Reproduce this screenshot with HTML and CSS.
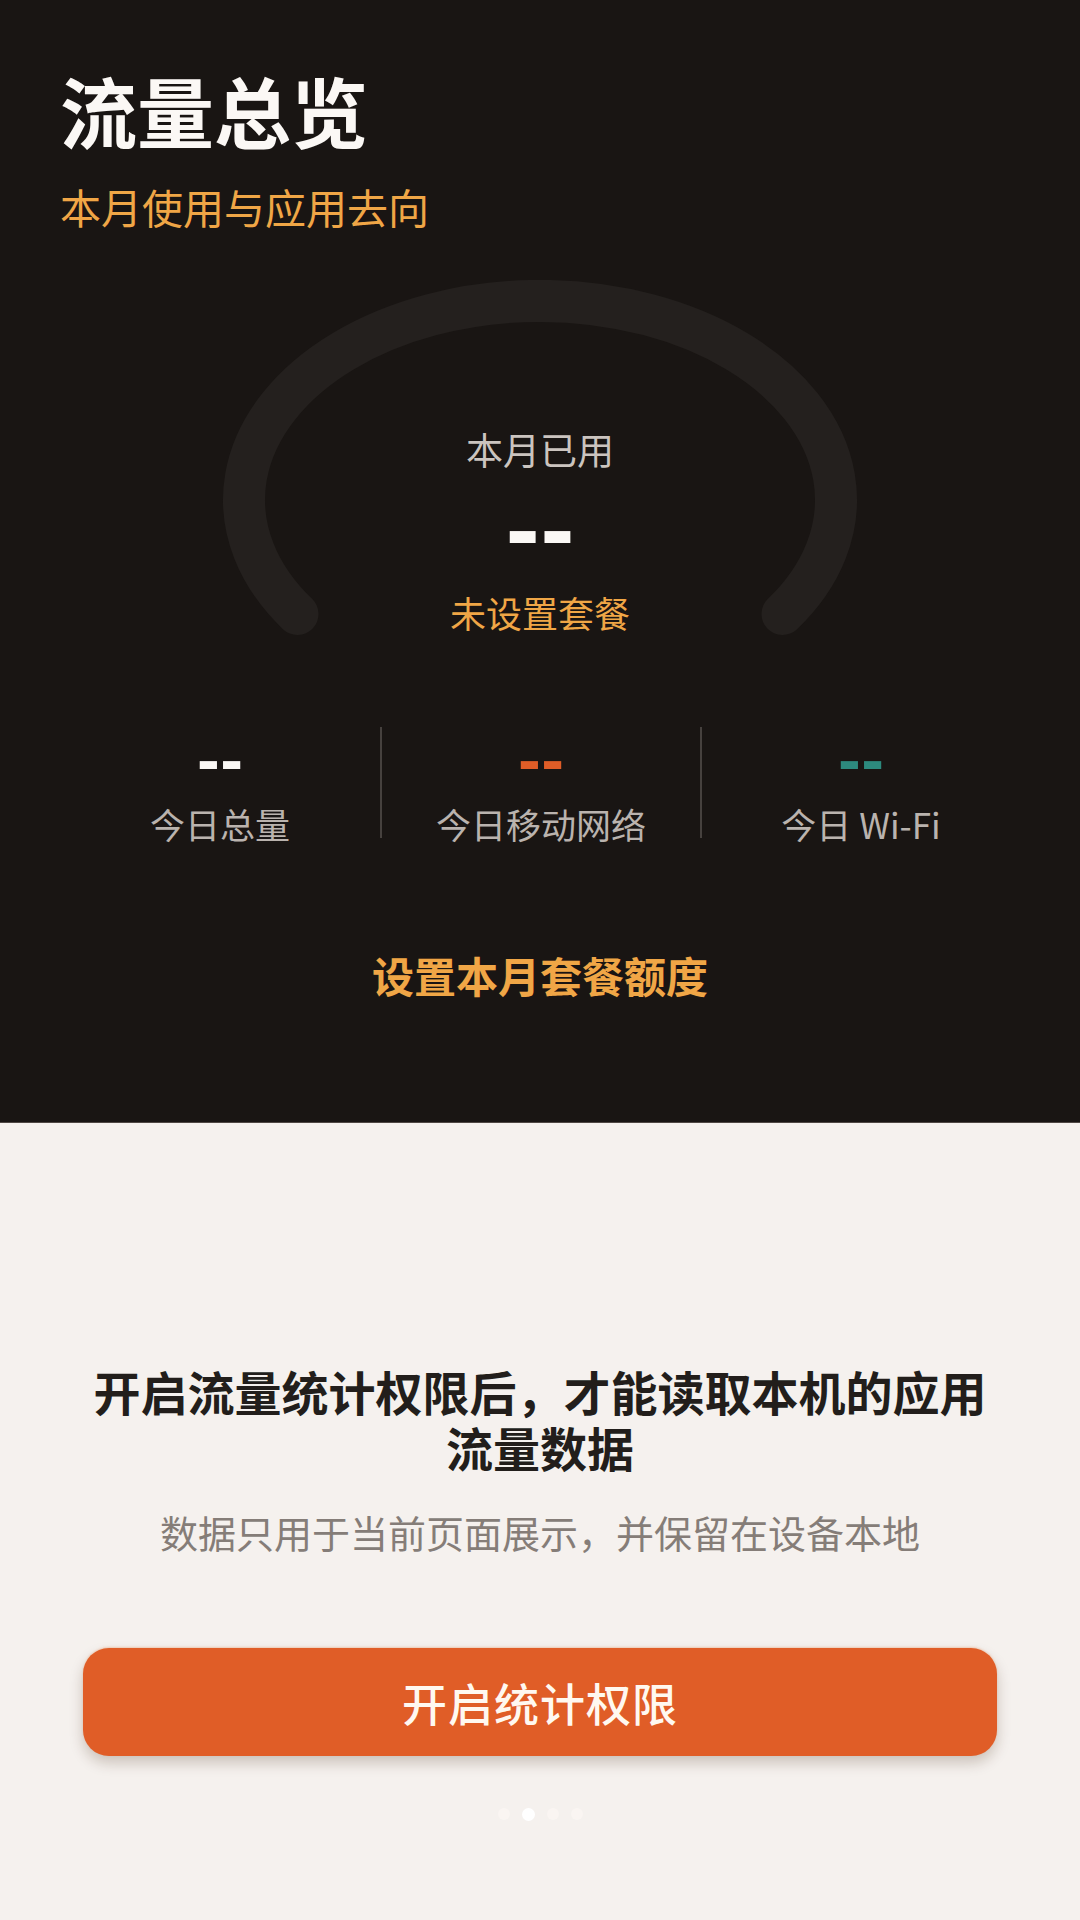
FILE: index.html
```html
<!DOCTYPE html>
<html lang="zh-CN">
<head>
  <meta charset="UTF-8">
  <title>流量总览</title>
  <meta name="viewport" content="width=device-width, initial-scale=1.0">
  <link rel="stylesheet" href="styles.css">
</head>
<body>

  <section class="hero">
    <h1 class="hero-title">流量总览</h1>
    <p class="hero-sub">本月使用与应用去向</p>

    <div class="gauge">
      <svg class="gauge-ring" viewBox="0 0 960 360" width="960" height="360">
        <path d="M 237.5 334 A 296 199 0 1 1 722.5 334" fill="none" stroke="#24201e" stroke-width="42" stroke-linecap="round"/>
      </svg>
      <div class="gauge-label">本月已用</div>
      <div class="gauge-value">--</div>
      <div class="gauge-plan">未设置套餐</div>
    </div>

    <div class="today">
      <div class="today-item">
        <div class="today-value">--</div>
        <div class="today-label">今日总量</div>
      </div>
      <div class="today-item">
        <div class="today-value mobile">--</div>
        <div class="today-label">今日移动网络</div>
      </div>
      <div class="today-item">
        <div class="today-value wifi">--</div>
        <div class="today-label">今日 Wi-Fi</div>
      </div>
    </div>

    <div class="plan-link">设置本月套餐额度</div>
  </section>

  <section class="perm">
    <h2 class="perm-title">开启流量统计权限后，才能读取本机的应用流量数据</h2>
    <p class="perm-desc">数据只用于当前页面展示，并保留在设备本地</p>
    <button class="perm-btn">开启统计权限</button>
    <div class="dots">
      <span class="dot"></span>
      <span class="dot active"></span>
      <span class="dot"></span>
      <span class="dot"></span>
    </div>
  </section>

</body>
</html>
```

FILE: styles.css
```css
:root {
  --dark: #191513;
  --ring: #24201e;
  --gold: #f0a646;
  --orange: #e05d27;
  --teal: #2d8a7e;
  --light: #f5f1ee;
}

* { box-sizing: border-box; }

body {
  margin: 0;
  width: 1080px;
  min-height: 1920px;
  font-family: "Noto Sans CJK SC", "Noto Sans", sans-serif;
  background: var(--light);
}

.hero {
  height: 1123px;
  padding: 64px 60px 0;
  background: var(--dark);
  border-bottom: 1px solid #4f4844;
}

.hero-title {
  margin: 0;
  font-size: 77px;
  line-height: 92px;
  font-weight: 700;
  color: #fbf8f5;
}

.hero-sub {
  margin: 22px 0 0;
  font-size: 41px;
  line-height: 56px;
  color: var(--gold);
}

.gauge {
  position: relative;
  height: 360px;
  margin-top: 46px;
  padding-top: 144px;
  display: flex;
  flex-direction: column;
  align-items: center;
}

.gauge-ring {
  position: absolute;
  top: 0;
  left: 0;
}

.gauge-label,
.gauge-value,
.gauge-plan {
  position: relative;
}

.gauge-label {
  font-size: 37px;
  line-height: 50px;
  color: #cbc4bf;
}

/* the dashes are a placeholder for the real number */
.gauge-value {
  margin-top: 9px;
  font-family: "DejaVu Sans", sans-serif;
  font-size: 84px;
  line-height: 98px;
  font-weight: 700;
  color: #fbf8f5;
}

.gauge-plan {
  margin-top: 6px;
  font-size: 36px;
  line-height: 50px;
  color: var(--gold);
}

.today {
  display: grid;
  grid-template-columns: repeat(3, 1fr);
  margin-top: 87px;
}

.today-item {
  height: 111px;
  padding-top: 2px;
  display: flex;
  flex-direction: column;
  align-items: center;
}

.today-item + .today-item {
  border-left: 2px solid #46413e;
}

.today-value {
  font-family: "DejaVu Sans", sans-serif;
  font-size: 56px;
  line-height: 65px;
  font-weight: 700;
  color: #fbf8f5;
}

.today-value.mobile { color: var(--orange); }
.today-value.wifi { color: var(--teal); }

.today-label {
  margin-top: 10px;
  font-size: 35px;
  line-height: 40px;
  color: #bab3ae;
}

.plan-link {
  margin-top: 109px;
  text-align: center;
  font-size: 42px;
  line-height: 56px;
  font-weight: 700;
  color: var(--gold);
}

.perm {
  padding: 240px 83px 0;
  display: flex;
  flex-direction: column;
  align-items: center;
}

.perm-title {
  margin: 0;
  width: 100%;
  text-align: center;
  font-size: 47px;
  line-height: 56px;
  font-weight: 700;
  color: #221e1b;
}

.perm-desc {
  margin: 31px 0 0;
  font-size: 38px;
  line-height: 52px;
  color: #857d78;
}

.perm-btn {
  margin-top: 90px;
  width: 100%;
  height: 108px;
  border: none;
  border-radius: 26px;
  background: var(--orange);
  color: #fff8f0;
  font-family: inherit;
  font-size: 45px;
  font-weight: 500;
  letter-spacing: 1px;
  box-shadow: 0 7px 14px rgba(60, 30, 10, 0.22), 0 -1px 2px rgba(240, 150, 90, 0.35);
}

.dots {
  margin-top: 52px;
  display: flex;
  gap: 12px;
}

.dot {
  width: 12px;
  height: 12px;
  border-radius: 50%;
  background: #faf5f2;
}

.dot.active {
  width: 13px;
  height: 13px;
  background: #ffffff;
}
```
